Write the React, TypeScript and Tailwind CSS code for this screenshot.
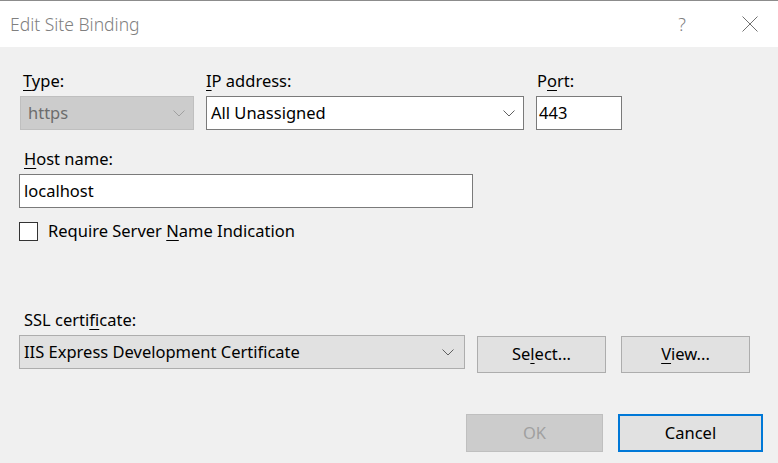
import React from "react";

const Chevron = ({ color = "#606060" }: { color?: string }) => (
  <svg width="12" height="7" viewBox="0 0 12 7" fill="none">
    <path d="M0.5 0.5 L6 6 L11.5 0.5" stroke={color} strokeWidth="1" />
  </svg>
);

const U = ({ children }: { children: React.ReactNode }) => (
  <span className="underline underline-offset-[3px] decoration-1">{children}</span>
);

export default function App() {
  return (
    <div
      className="w-[778px] h-[463px] flex flex-col border-t border-[#8c8c8c] bg-[#f0f0f0] text-black overflow-hidden"
      style={{ fontFamily: '"Noto Sans", "Open Sans", sans-serif' }}
    >
      {/* Title bar */}
      <div className="h-[46px] bg-white flex items-center pl-[10px] shrink-0">
        <div className="text-[17.5px] text-[#808080] font-light leading-none mt-[2px]">Edit Site Binding</div>
        <div className="flex-1" />
        <div className="text-[18px] text-[#808080] font-light mr-[56px] leading-none">?</div>
        <svg width="16" height="16" viewBox="0 0 16 16" className="mr-[20px]">
          <path d="M0.5 0.5 L15.5 15.5 M15.5 0.5 L0.5 15.5" stroke="#707070" strokeWidth="1" />
        </svg>
      </div>

      {/* Body */}
      <div className="flex-1 flex flex-col pl-[19px] text-[16.5px]">
        {/* Row 1 */}
        <div className="flex mt-[23px]">
          <div className="flex flex-col w-[174px] ml-[1px]">
            <div className="h-[22px] leading-[22px] pl-[3px]"><U>T</U>ype:</div>
            <div className="mt-[4px] h-[34px] bg-[#cccccc] border border-[#bfbfbf] flex items-center pl-[7px] pr-[8px] text-[#6d6d6d]">
              <span className="flex-1">https</span>
              <Chevron color="#a0a0a0" />
            </div>
          </div>
          <div className="flex flex-col w-[318px] ml-[12px]">
            <div className="h-[22px] leading-[22px]"><U>I</U>P address:</div>
            <div className="mt-[4px] h-[34px] bg-white border border-[#7a7a7a] flex items-center pl-[4px] pr-[8px]">
              <span className="flex-1">All Unassigned</span>
              <Chevron />
            </div>
          </div>
          <div className="flex flex-col w-[86px] ml-[12px]">
            <div className="h-[22px] leading-[22px] pl-[1px]">P<U>o</U>rt:</div>
            <div className="mt-[4px] h-[34px] bg-white border border-[#7a7a7a] flex items-center pl-[2px]">
              443
            </div>
          </div>
        </div>

        {/* Host name */}
        <div className="flex flex-col mt-[18px] w-[454px]">
          <div className="h-[22px] leading-[22px] pl-[5px]"><U>H</U>ost name:</div>
          <div className="mt-[4px] h-[34px] bg-white border border-[#7a7a7a] flex items-center pl-[4px]">
            localhost
          </div>
        </div>

        {/* Checkbox */}
        <div className="flex items-center mt-[12px] h-[22px]">
          <div className="w-[19px] h-[19px] bg-white border border-[#333333]" />
          <span className="ml-[10px] leading-[22px]">Require Server <U>N</U>ame Indication</span>
        </div>

        {/* SSL */}
        <div className="flex flex-col mt-[67px]">
          <div className="h-[22px] leading-[22px] pl-[5px]">SSL certi<U>f</U>icate:</div>
          <div className="flex items-start mt-[4px]">
            <div className="w-[446px] h-[34px] bg-[#e1e1e1] border border-[#adadad] flex items-center pl-[4px] pr-[10px]">
              <span className="flex-1">IIS Express Development Certificate</span>
              <Chevron />
            </div>
            <button className="ml-[12px] mt-[1px] w-[129px] h-[37px] bg-[#e1e1e1] border border-[#adadad] flex items-center justify-center">
              Se<U>l</U>ect...
            </button>
            <button className="ml-[15px] mt-[1px] w-[129px] h-[37px] bg-[#e1e1e1] border border-[#adadad] flex items-center justify-center">
              <U>V</U>iew...
            </button>
          </div>
        </div>

        {/* Bottom buttons */}
        <div className="flex mt-[41px] ml-[447px]">
          <button className="w-[137px] h-[38px] bg-[#cccccc] border border-[#bfbfbf] text-[#a0a0a0] flex items-center justify-center">
            OK
          </button>
          <button className="ml-[15px] w-[145px] h-[38px] bg-[#e1e1e1] border-2 border-[#0078d7] flex items-center justify-center">
            Cancel
          </button>
        </div>
      </div>
    </div>
  );
}
